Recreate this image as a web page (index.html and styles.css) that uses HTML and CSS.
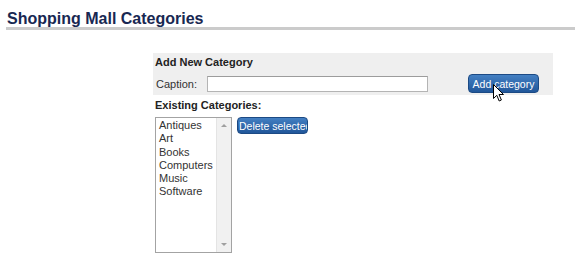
FILE: index.html
```html
<!DOCTYPE html>
<html lang="en">
<head>
  <meta charset="UTF-8">
  <title>Shopping Mall Categories</title>
  <link rel="stylesheet" href="styles.css">
</head>
<body>

<div class="header">
  <h1>Shopping Mall Categories</h1>
</div>

<div class="main">
  <div class="panel">
    <div class="panel-title">Add New Category</div>
    <div class="row">
      <label class="caption" for="caption">Caption:</label>
      <input type="text" id="caption" class="text-input">
      <span class="btn-wrap">
        <button class="btn add-btn">Add category</button>
        <svg class="cursor" width="12" height="19" viewBox="0 0 12 19">
          <path d="M0.5 0.5 L0.5 14.5 L3.8 11.3 L6.2 17 L8.4 16 L6 10.5 L10.5 10.5 Z" fill="#fff" stroke="#000" stroke-width="1" stroke-linejoin="round"/>
        </svg>
      </span>
    </div>
  </div>

  <div class="section-title">Existing Categories:</div>
  <div class="list-row">
    <div class="listbox">
      <ul class="items">
        <li>Antiques</li>
        <li>Art</li>
        <li>Books</li>
        <li>Computers</li>
        <li>Music</li>
        <li>Software</li>
      </ul>
      <div class="scrollbar">
        <span class="arrow up"></span>
        <span class="arrow down"></span>
      </div>
    </div>
    <button class="btn del-btn">Delete selected</button>
  </div>
</div>

</body>
</html>
```

FILE: styles.css
```css
body {
  margin: 0;
  font-family: "Liberation Sans", Arial, sans-serif;
  color: #222;
  background: #fff;
}

.header {
  margin-left: 6px;
  border-bottom: 3px solid #cbcbcb;
}

.header h1 {
  margin: 10px 0 0 1px;
  font-size: 16px;
  line-height: 17px;
  font-weight: bold;
  color: #182852;
}

.main {
  margin: 23px 0 0 153px;
}

.panel {
  width: 384px;
  height: 37px;
  padding: 3px 14px 2px 2px;
  background: #efefef;
}

.panel-title,
.section-title {
  font-size: 11px;
  line-height: 13px;
  font-weight: bold;
  color: #222;
}

.row {
  display: flex;
  align-items: center;
  height: 19px;
  margin-top: 5px;
}

.caption {
  width: 52px;
  padding-left: 1px;
  box-sizing: border-box;
  font-size: 11px;
  color: #333;
}

.text-input {
  width: 221px;
  height: 16px;
  box-sizing: border-box;
  margin: 0;
  padding: 0 2px;
  border: 1px solid #b4b4b4;
  border-top-color: #9c9c9c;
  background: #fff;
  outline: none;
}

.btn-wrap {
  position: relative;
  margin-left: 40px;
  display: flex;
}

.btn {
  margin: 0;
  font-family: "Liberation Sans", Arial, sans-serif;
  font-size: 10.5px;
  color: #fff;
  background: linear-gradient(#437fc2, #21579a);
  border: 1px solid #1c4a84;
  border-radius: 4px;
  box-sizing: border-box;
  white-space: nowrap;
  overflow: hidden;
}

.add-btn {
  width: 71px;
  height: 19px;
  padding: 0;
  text-align: center;
}

.cursor {
  position: absolute;
  left: 25px;
  top: 10px;
}

.section-title {
  margin-top: 4px;
  padding-left: 2px;
}

.list-row {
  display: flex;
  align-items: flex-start;
  margin-top: 5px;
  padding-left: 2px;
}

.listbox {
  display: flex;
  width: 77px;
  height: 136px;
  box-sizing: border-box;
  border: 1px solid #a3a3a3;
  background: #fff;
}

.items {
  flex: 1;
  list-style: none;
  margin: 0;
  padding: 1px 0 0 3px;
  font-size: 11px;
  line-height: 13.3px;
  color: #333;
}

.scrollbar {
  position: relative;
  width: 14px;
  background: #f1f1f1;
  border-left: 1px solid #e4e4e4;
}

.arrow {
  position: absolute;
  left: 4px;
  width: 0;
  height: 0;
  border-left: 3px solid transparent;
  border-right: 3px solid transparent;
}

.arrow.up {
  top: 6px;
  border-bottom: 3px solid #a0a0a0;
}

.arrow.down {
  bottom: 6px;
  border-top: 3px solid #a0a0a0;
}

.del-btn {
  width: 71px;
  height: 17px;
  margin-left: 5px;
  padding: 0 0 0 1px;
  text-align: left;
}
```
